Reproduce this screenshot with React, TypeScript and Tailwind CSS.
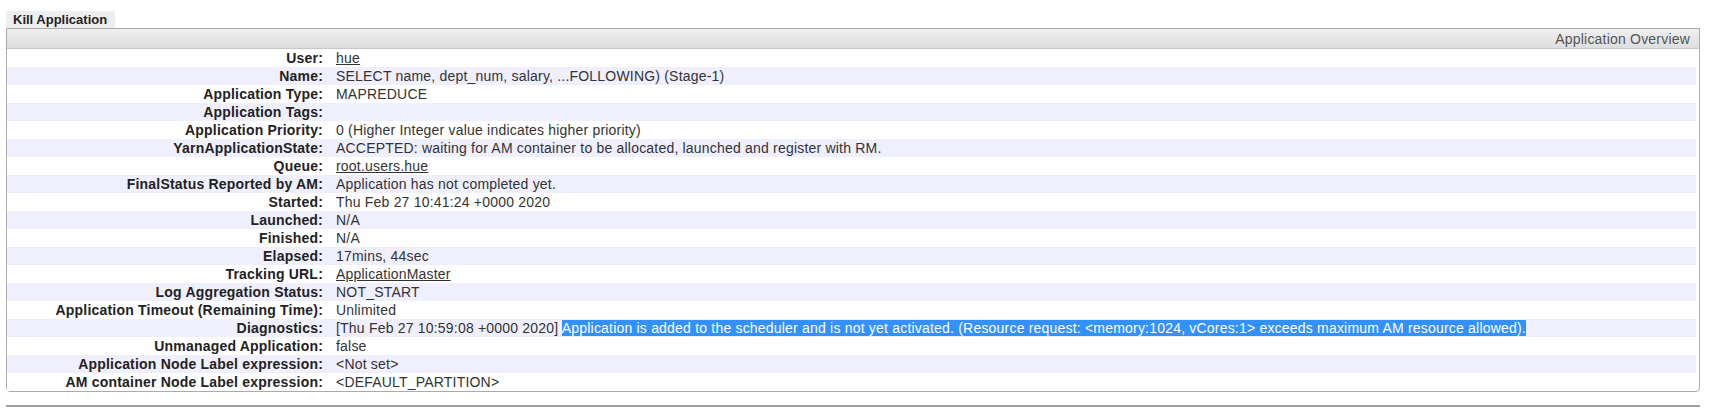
import React from 'react';

type Row = { label: string; value: React.ReactNode };

const rows: Row[] = [
  { label: 'User:', value: <a className="underline text-[#333]">hue</a> },
  { label: 'Name:', value: 'SELECT name, dept_num, salary, ...FOLLOWING) (Stage-1)' },
  { label: 'Application Type:', value: 'MAPREDUCE' },
  { label: 'Application Tags:', value: '' },
  { label: 'Application Priority:', value: '0 (Higher Integer value indicates higher priority)' },
  { label: 'YarnApplicationState:', value: 'ACCEPTED: waiting for AM container to be allocated, launched and register with RM.' },
  { label: 'Queue:', value: <a className="underline text-[#333]">root.users.hue</a> },
  { label: 'FinalStatus Reported by AM:', value: 'Application has not completed yet.' },
  { label: 'Started:', value: 'Thu Feb 27 10:41:24 +0000 2020' },
  { label: 'Launched:', value: 'N/A' },
  { label: 'Finished:', value: 'N/A' },
  { label: 'Elapsed:', value: '17mins, 44sec' },
  { label: 'Tracking URL:', value: <a className="underline text-[#333]">ApplicationMaster</a> },
  { label: 'Log Aggregation Status:', value: 'NOT_START' },
  { label: 'Application Timeout (Remaining Time):', value: 'Unlimited' },
  {
    label: 'Diagnostics:',
    value: (
      <>
        [Thu Feb 27 10:59:08 +0000 2020]{' '}
        <span className="bg-[#3390ff] text-white">
          Application is added to the scheduler and is not yet activated. (Resource request: &lt;memory:1024, vCores:1&gt; exceeds maximum AM resource allowed).
        </span>
      </>
    ),
  },
  { label: 'Unmanaged Application:', value: 'false' },
  { label: 'Application Node Label expression:', value: '<Not set>' },
  { label: 'AM container Node Label expression:', value: '<DEFAULT_PARTITION>' },
];

export default function App() {
  return (
    <div className="w-[1710px] h-[409px] bg-white text-[14px] tracking-[0.2px] text-[#333] font-['Liberation_Sans',Arial,sans-serif] overflow-hidden">
      <div className="pt-[11px] pl-[6px] pr-[10px]">
        <div className="w-fit bg-[#eeeeee] h-[17px] leading-[17px] pl-[7px] pr-[8px] text-[13px] tracking-normal font-bold text-[#222]">
          Kill Application
        </div>
        <div className="border border-[#aaaaaa] rounded-b-[4px]">
          <div className="h-[20px] leading-[20px] bg-linear-to-b from-[#efefef] to-[#dedede] border-b border-[#c8c8c8] text-right pr-[9px] text-[#555]">
            Application Overview
          </div>
          <div className="mr-[3px]">
            {rows.map((row, i) => (
              <div
                key={i}
                className={`flex h-[18px] leading-[18px] ${i % 2 === 1 ? 'bg-[#efeffd]' : 'bg-white'}`}
              >
                <div className="w-[316px] shrink-0 text-right font-bold text-[#222]">{row.label}</div>
                <div className="pl-[13px] whitespace-nowrap">{row.value}</div>
              </div>
            ))}
          </div>
        </div>
        <div className="mt-[13px] h-[2px] bg-[#a0a0a0]" />
      </div>
    </div>
  );
}
